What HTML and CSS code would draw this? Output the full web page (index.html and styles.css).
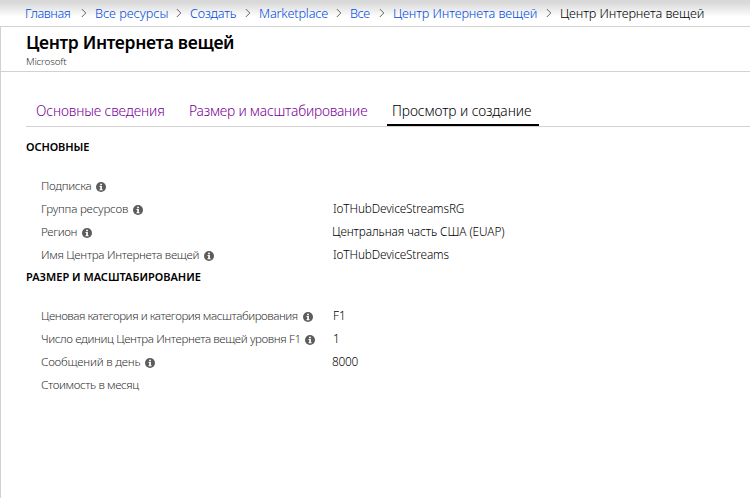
FILE: index.html
```
<!DOCTYPE html>
<html lang="ru">
<head>
<meta charset="utf-8">
<title>Центр Интернета вещей</title>
<link rel="stylesheet" href="styles.css">
</head>
<body>
<svg width="0" height="0" class="defs">
  <symbol id="chevron" viewBox="0 0 6 10"><path d="M.8 1 4.8 5 .8 9" fill="none" stroke="#666" stroke-width="1"/></symbol>
  <symbol id="info" viewBox="0 0 10 10"><circle cx="5" cy="5" r="5" fill="#5c5c5c"/><path d="M4.1 1.7h1.8v1.6H4.1zM3.5 4.1h2.4v3.2h.7v1H3.5v-1h.7V5.1h-.7z" fill="#fff"/></symbol>
</svg>
<nav>
  <ol class="crumbs">
    <li><a class="t-40">Главная</a><svg class="chev"><use href="#chevron"/></svg></li>
    <li><a>Все ресурсы</a><svg class="chev"><use href="#chevron"/></svg></li>
    <li><a class="t-22">Создать</a><svg class="chev"><use href="#chevron"/></svg></li>
    <li><a class="t-17">Marketplace</a><svg class="chev"><use href="#chevron"/></svg></li>
    <li><a class="t-40">Все</a><svg class="chev"><use href="#chevron"/></svg></li>
    <li><a class="t-08">Центр Интернета вещей</a><svg class="chev"><use href="#chevron"/></svg></li>
    <li><span class="t-08">Центр Интернета вещей</span></li>
  </ol>
</nav>
<main>
  <header>
    <h1>Центр Интернета вещей</h1>
    <p>Microsoft</p>
  </header>
  <div class="tabs">
    <a class="tab t-13">Основные сведения</a>
    <a class="tab t-22">Размер и масштабирование</a>
    <a class="tab active t-08">Просмотр и создание</a>
  </div>
  <section>
    <h2 class="t-08">ОСНОВНЫЕ</h2>
    <dl>
      <dt class="t-30">Подписка<svg class="info"><use href="#info"/></svg></dt><dd></dd>
      <dt class="t-20">Группа ресурсов<svg class="info"><use href="#info"/></svg></dt><dd class="latin t-13">IoTHubDeviceStreamsRG</dd>
      <dt class="t-40">Регион<svg class="info"><use href="#info"/></svg></dt><dd class="t-08">Центральная часть США (EUAP)</dd>
      <dt class="t-30">Имя Центра Интернета вещей<svg class="info"><use href="#info"/></svg></dt><dd class="latin t-13">IoTHubDeviceStreams</dd>
    </dl>
  </section>
  <section>
    <h2>РАЗМЕР И МАСШТАБИРОВАНИЕ</h2>
    <dl>
      <dt class="t-45">Ценовая категория и категория масштабирования<svg class="info"><use href="#info"/></svg></dt><dd class="latin">F1</dd>
      <dt class="t-38">Число единиц Центра Интернета вещей уровня F1<svg class="info"><use href="#info"/></svg></dt><dd class="latin">1</dd>
      <dt class="t-22">Сообщений в день<svg class="info"><use href="#info"/></svg></dt><dd class="t-25">8000</dd>
      <dt class="t-38">Стоимость в месяц</dt><dd></dd>
    </dl>
  </section>
</main>
</body>
</html>
```
FILE: styles.css
```
* { box-sizing: border-box; }
body { margin: 0; height: 498px; overflow: hidden; background: #fff; color: #000; font-family: "Noto Sans", "Open Sans", sans-serif; font-weight: 300; display: flex; flex-direction: column; }
.defs { position: absolute; }
h1, h2, p, ol, dl, dd { margin: 0; padding: 0; }

nav { flex: none; height: 27px; padding-left: 25px; background: linear-gradient(#d8d8d8 0, #dadada 3px, #fff 17px); border-bottom: 1px solid #d2d2d2; }
.crumbs { list-style: none; display: grid; grid-template-columns: 70px 95px 69px 91px 43px 167px auto; font-size: 12.7px; line-height: 27px; white-space: nowrap; }
.crumbs li { display: flex; align-items: center; justify-content: space-between; padding-right: 8px; height: 26px; }
.crumbs a { color: #004be0; }
.chev { flex: none; width: 6px; height: 10px; }

main { flex: 1; border-left: 1px solid #d2d2d2; }
header { height: 45px; padding: 4px 0 0 25px; border-bottom: 1px solid #d2d2d2; }
h1 { font-size: 17.5px; font-weight: 600; line-height: 22px; letter-spacing: -.33px; }
p { margin-top: 1px; font-size: 9.9px; line-height: 14px; letter-spacing: -.18px; color: #333; }

.tabs { display: flex; margin: 28px 0 9px 25px; height: 27px; border-bottom: 1px solid #d2d2d2; }
.tab { height: 26px; font-size: 13.8px; line-height: 22px; color: #780098; white-space: nowrap; width: 153px; padding-left: 10px; }
.tab + .tab { width: 208px; }
.tab.active { width: 152px; padding-left: 5px; color: #000; border-bottom: 2px solid #000; }

section { padding-left: 25px; }
h2 { height: 38px; font-size: 11px; font-weight: 600; line-height: 22px; }
dl { display: grid; grid-template-columns: 291px 1fr; grid-auto-rows: 23px; padding-left: 15px; font-size: 11.6px; line-height: 23px; white-space: nowrap; }
dt { display: flex; align-items: center; color: #333; }
dd { font-size: 11.8px; }
.latin { padding-left: 1px; }
.info { flex: none; width: 10px; height: 10px; margin: 3px 0 0 4.7px; }

.t-08 { letter-spacing: -.08px; }
.t-13 { letter-spacing: -.13px; }
.t-17 { letter-spacing: -.17px; }
.t-20 { letter-spacing: -.2px; }
.t-22 { letter-spacing: -.22px; }
.t-25 { letter-spacing: -.25px; }
.t-30 { letter-spacing: -.3px; }
.t-38 { letter-spacing: -.38px; }
.t-40 { letter-spacing: -.4px; }
.t-45 { letter-spacing: -.45px; }
```
